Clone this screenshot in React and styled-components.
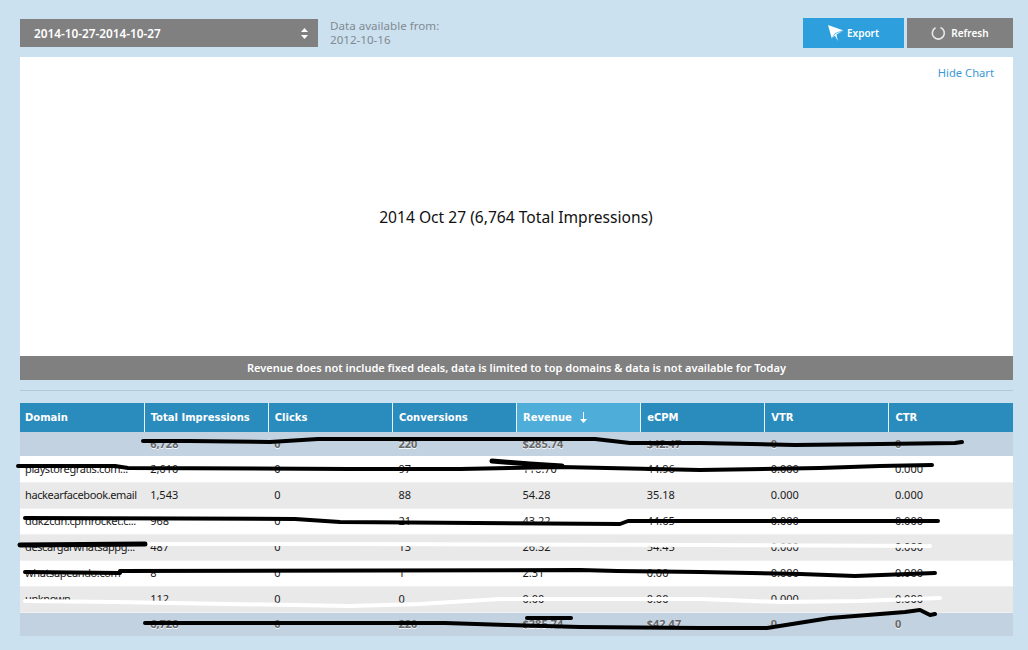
import React from 'react';
import styled, { createGlobalStyle } from 'styled-components';

const GlobalStyle = createGlobalStyle`
  html, body {
    margin: 0;
    padding: 0;
    background: #cce1ef;
  }
  body {
    font-family: "Noto Sans", "Liberation Sans", sans-serif;
    font-size: 11px;
  }
`;

const columns = ['Domain', 'Total Impressions', 'Clicks', 'Conversions', 'Revenue', 'eCPM', 'VTR', 'CTR'];

const rows = [
  ['playstoregratis.com...', '2,610', '0', '97', '116.70', '44.96', '0.000', '0.000'],
  ['hackearfacebook.email', '1,543', '0', '88', '54.28', '35.18', '0.000', '0.000'],
  ['ddk2cdn.cpmrocket.c...', '968', '0', '21', '43.22', '44.65', '0.000', '0.000'],
  ['descargarwhatsappg...', '487', '0', '13', '26.32', '54.45', '0.000', '0.000'],
  ['whatsapeando.com', '8', '0', '1', '2.31', '0.00', '0.000', '0.000'],
  ['unknown', '112', '0', '0', '0.00', '0.00', '0.000', '0.000'],
];

const summary = ['', '6,728', '0', '220', '$285.74', '$42.47', '0', '0'];

const Page = styled.div`
  position: relative;
  box-sizing: border-box;
  width: 1028px;
  height: 650px;
  padding: 18px 15px 0 20px;
  overflow: hidden;
  background: #cce1ef;
`;

const Toolbar = styled.div`
  display: flex;
  align-items: center;
  height: 30px;
`;

const DateSelect = styled.div`
  display: flex;
  align-items: center;
  justify-content: space-between;
  box-sizing: border-box;
  width: 298px;
  height: 28px;
  padding: 0 9px 0 14px;
  background: #808080;
  color: #fff;
  font-size: 11.800px;
  font-weight: 600;
`;

const Availability = styled.div`
  margin-left: 12px;
  color: #808a92;
  font-size: 11.600px;
  line-height: 14px;
`;

const Actions = styled.div`
  display: flex;
  gap: 3px;
  margin-left: auto;
`;

const ActionButton = styled.button`
  display: flex;
  align-items: center;
  justify-content: center;
  gap: ${(p) => p.$gap}px;
  width: ${(p) => p.$width}px;
  height: 30px;
  padding: 0;
  border: 0;
  background: ${(p) => p.$color};
  color: #fff;
  font-family: "Noto Sans", sans-serif;
  font-size: 10px;
  font-weight: 600;
`;

const ChartPanel = styled.section`
  display: flex;
  flex-direction: column;
  height: 323px;
  margin-top: 9px;
  background: #fff;
`;

const ChartHead = styled.div`
  display: flex;
  justify-content: flex-end;
  height: 20px;
  padding: 8px 19px 0 0;
  box-sizing: border-box;
  line-height: 16px;
`;

const HideLink = styled.a`
  color: #3a97d8;
  font-size: 11.200px;
`;

const ChartBody = styled.div`
  flex: 1;
  display: flex;
  align-items: center;
  justify-content: center;
  padding-right: 1px;
  color: #111;
  font-size: 15.600px;
`;

const Notice = styled.div`
  height: 24px;
  background: #808080;
  color: #fff;
  font-size: 11px;
  font-weight: 600;
  line-height: 24px;
  text-align: center;
`;

const Divider = styled.hr`
  height: 1px;
  margin: 10px 0 12px;
  border: 0;
  background: #b4c9d8;
`;

const Table = styled.table`
  width: 100%;
  border-collapse: collapse;
  table-layout: fixed;
  font-size: 11px;
`;

const HeadCell = styled.th`
  box-sizing: border-box;
  height: 29px;
  padding: 0 0 0 ${(p) => (p.$first ? 5 : 6)}px;
  border-right: ${(p) => (p.$last ? '0' : '1px solid #e8f1f6')};
  background: ${(p) => (p.$active ? '#4fadd9' : '#2a8bbd')};
  color: #fff;
  font-family: "DejaVu Sans", sans-serif;
  font-size: 10px;
  font-weight: 700;
  text-align: left;
`;

const SummaryCell = styled.td`
  box-sizing: border-box;
  height: 24px;
  padding: 0 0 1px 6px;
  background: #c3d2e0;
  color: #666;
  font-weight: 700;
  text-shadow: 0 1px 0 #f4f7fa;
`;

const Row = styled.tr`
  background: ${(p) => (p.$alt ? '#e9e9e9' : '#fff')};
`;

const Cell = styled.td`
  box-sizing: border-box;
  height: 26px;
  padding: 0 0 1px ${(p) => (p.$first ? 5 : 6)}px;
  border-bottom: 1px solid #f0f0f0;
  color: #1a1a1a;
  letter-spacing: ${(p) => (p.$first ? '-0.38px' : '0')};
  white-space: nowrap;
  overflow: hidden;
`;

const SortArrow = styled.svg`
  margin: -4px 0 -4px 8px;
  vertical-align: 2px;
`;

const Scribbles = styled.svg`
  position: absolute;
  top: 0;
  left: 0;
  pointer-events: none;
`;

const SpinnerIcon = () => (
  <svg width="9" height="13" viewBox="0 0 9 13">
    <path d="M4.500 1 8 5H1zM4.500 12 1 8h7z" fill="#fff" />
  </svg>
);

const PlaneIcon = () => (
  <svg width="16" height="17" viewBox="0 0 16 17">
    <path d="M0 0 15.500 5.500 8.500 9.500 9.800 16 7 10.800 3.800 13.500z" fill="#fff" />
    <path d="M3.800 13.500 7 8.500 15.500 5.500" fill="none" stroke="#2d9fdc" strokeWidth="0.700" />
  </svg>
);

const RefreshIcon = () => (
  <svg width="15" height="15" viewBox="0 0 15 15">
    <path d="M9.500 1.500a6 6 0 1 1-5 .3" fill="none" stroke="#e8e8e8" strokeWidth="1.600" />
  </svg>
);

const SortIcon = () => (
  <SortArrow width="7" height="11" viewBox="0 0 7 11">
    <path d="M3 0h1v7h3l-3.500 4L0 7h3z" fill="#fff" />
  </SortArrow>
);

const App = () => (
  <Page>
    <GlobalStyle />
    <Toolbar>
      <DateSelect>
        2014-10-27-2014-10-27
        <SpinnerIcon />
      </DateSelect>
      <Availability>
        Data available from:
        <br />
        2012-10-16
      </Availability>
      <Actions>
        <ActionButton $width={101} $gap={3} $color="#2d9fdc">
          <PlaneIcon />
          Export
        </ActionButton>
        <ActionButton $width={106} $gap={5} $color="#808080">
          <RefreshIcon />
          Refresh
        </ActionButton>
      </Actions>
    </Toolbar>

    <ChartPanel>
      <ChartHead>
        <HideLink>Hide Chart</HideLink>
      </ChartHead>
      <ChartBody>2014 Oct 27 (6,764 Total Impressions)</ChartBody>
      <Notice>Revenue does not include fixed deals, data is limited to top domains &amp; data is not available for Today</Notice>
    </ChartPanel>

    <Divider />

    <Table>
      <thead>
        <tr>
          {columns.map((c, i) => (
            <HeadCell key={c} $first={i === 0} $active={c === 'Revenue'} $last={i === columns.length - 1}>
              {c}
              {c === 'Revenue' && <SortIcon />}
            </HeadCell>
          ))}
        </tr>
      </thead>
      <tbody>
        <tr>
          {summary.map((v, i) => (
            <SummaryCell key={i}>{v}</SummaryCell>
          ))}
        </tr>
        {rows.map((r, i) => (
          <Row key={r[0]} $alt={i % 2 === 1}>
            {r.map((v, j) => (
              <Cell key={j} $first={j === 0}>{v}</Cell>
            ))}
          </Row>
        ))}
        <tr>
          {summary.map((v, i) => (
            <SummaryCell key={i}>{v}</SummaryCell>
          ))}
        </tr>
      </tbody>
    </Table>

    {/* hand drawn marker strokes over the table */}
    <Scribbles width="1028" height="650" viewBox="0 0 1028 650" fill="none" strokeLinecap="round" strokeLinejoin="round">
      <g stroke="#fff" strokeWidth="4">
        <path d="M515 468 542 469" />
        <path d="M145 544 350 544 700 545 930 546" />
        <path d="M25 601 115 602 350 606 420 604 500 599 700 599 780 602 860 601 940 598" />
      </g>
      <g stroke="#000" strokeWidth="4">
        <path d="M143 441 189 441 270 442 318 439 595 439 630 443 700 443 795 445 880 444 955 443 962 442" />
        <path d="M18 466 115 466 128 468 350 469 460 469 560 467 700 470 820 468 880 466 932 465" />
        <path d="M492 461 530 464 562 466" strokeWidth="5" />
        <path d="M25 518 295 519 340 522 620 524 628 521 938 521" />
        <path d="M20 545 145 544" strokeWidth="5" />
        <path d="M25 572 120 573M120 571 580 570 617 571 700 572 800 574 855 576 935 573" />
        <path d="M145 623 445 623 507 625 580 627 700 628 767 628 830 618 905 612 920 610 930 615 935 614" />
        <path d="M527 618 571 618" strokeWidth="4" />
      </g>
    </Scribbles>
  </Page>
);

export default App;
